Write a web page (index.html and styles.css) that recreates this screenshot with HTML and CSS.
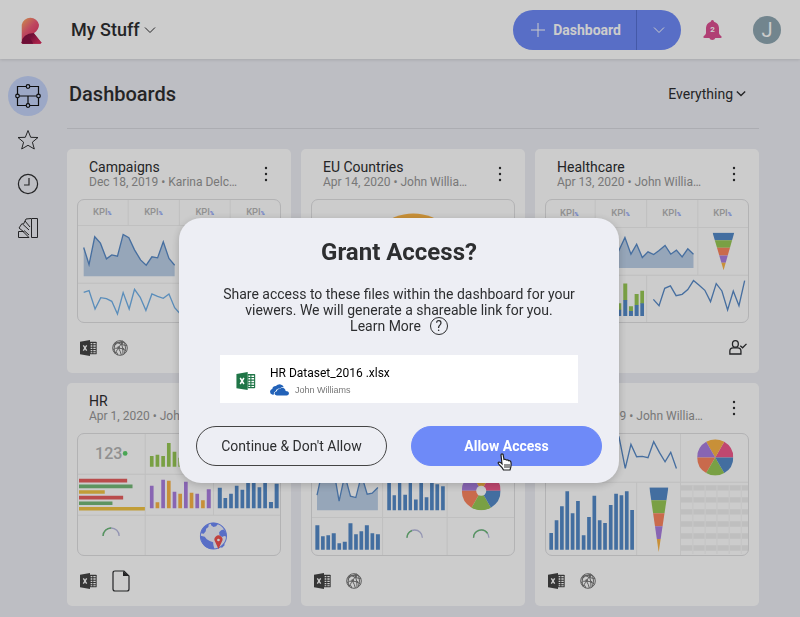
FILE: index.html
```html
<!DOCTYPE html>
<html lang="en">
<head>
<meta charset="utf-8">
<meta name="viewport" content="width=device-width, initial-scale=1">
<title>My Stuff</title>
<link rel="stylesheet" href="styles.css">
</head>
<body>
<svg class="defs" aria-hidden="true">
  <defs>
    <linearGradient id="logo-top" x1="0" y1="0" x2="0.7" y2="0.9">
      <stop offset="0" stop-color="#ffb45e"/><stop offset="0.5" stop-color="#ee5a78"/><stop offset="1" stop-color="#e0315f"/>
    </linearGradient>
    <linearGradient id="logo-leg" x1="0" y1="0" x2="1" y2="0.6">
      <stop offset="0" stop-color="#7a0f3a"/><stop offset="0.5" stop-color="#8f1647"/><stop offset="1" stop-color="#d42a5c"/>
    </linearGradient>
    <clipPath id="funnel-a"><path d="M547 263H612L580 376Z"/></clipPath>
    <clipPath id="funnel-b"><path d="M358 337H415L386 531Z"/></clipPath>
  </defs>
  <symbol id="chevron" viewBox="0 0 12 8"><path d="M1 1.5L6 6.5L11 1.5" fill="none" stroke="currentColor"/></symbol>
  <symbol id="kebab" viewBox="0 0 4 16"><g fill="currentColor"><circle cx="2" cy="2" r="1.2"/><circle cx="2" cy="8" r="1.2"/><circle cx="2" cy="14" r="1.2"/></g></symbol>
  <symbol id="excel" viewBox="0 0 51 48">
    <path d="M30 5H48Q50 5 50 7V41Q50 43 48 43H30Z" fill="currentColor"/>
    <path d="M32 9H37V13H32ZM40 9H47V13H40ZM32 16H37V20H32ZM40 16H47V20H40ZM32 23H37V27H32ZM40 23H47V27H40ZM32 30H37V34H32ZM40 30H47V34H40ZM32 37H37V40H32ZM40 37H47V40H40Z" fill="#fff"/>
    <path d="M0 5L30 0V48L0 43Z" fill="currentColor"/>
    <path d="M10 16L20 32M20 16L10 32" fill="none" stroke="#fff" stroke-width="4"/>
  </symbol>
  <symbol id="ball" viewBox="0 0 48 48">
    <g fill="none" stroke="currentColor" stroke-width="3">
      <circle cx="24" cy="24" r="22"/>
      <path d="M8 9Q26 6 38 8M13 6Q28 16 45 17M4 18Q14 8 32 3M33 3Q25 15 9 40M9 40Q3 28 9 12M19 24Q34 24 44 34M19 24Q26 34 28 45M3 30Q10 23 19 24M38 9Q44 24 37 41M28 10Q34 22 33 44M8 37Q18 36 17 45"/>
    </g>
    <g fill="currentColor"><circle cx="20" cy="23" r="4"/><circle cx="30" cy="11" r="3"/><circle cx="34" cy="27" r="3"/><circle cx="10" cy="11" r="3"/></g>
  </symbol>
  <symbol id="pie" viewBox="-60 -60 120 120">
    <path d="M0 0L60 0A60 60 0 0 0 30 -52Z" fill="#f05a8c"/>
    <path d="M0 0L30 -52A60 60 0 0 0 -30 -52Z" fill="#fab446"/>
    <path d="M0 0L-30 -52A60 60 0 0 0 -60 0Z" fill="#ab7fe0"/>
    <path d="M0 0L-60 0A60 60 0 0 0 -30 52Z" fill="#fc8560"/>
    <path d="M0 0L-30 52A60 60 0 0 0 30 52Z" fill="#98c955"/>
    <path d="M0 0L30 52A60 60 0 0 0 60 0Z" fill="#548ac8"/>
  </symbol>
</svg>

<header class="topbar">
  <a class="logo" href="#" aria-label="Home">
    <svg viewBox="0 0 62 86">
      <path d="M1 85V27A27 27 0 0 1 54 27Q54 43 38 53L61 82Q61 85 56 85Z" fill="url(#logo-top)"/>
      <path d="M1 81Q3 54 38 52L61 81Q62 85 57 85H5Q1 85 1 81Z" fill="url(#logo-leg)"/>
      <path d="M12 62Q29 66 36 85H5Q1 85 1 81Q3 69 12 62Z" fill="#8a1244"/>
    </svg>
  </a>
  <button class="workspace" type="button">My Stuff <svg class="chev"><use href="#chevron"/></svg></button>
  <div class="create">
    <button class="create-main" type="button"><svg viewBox="0 0 14 14"><path d="M7 0V14M0 7H14" stroke="#fff" fill="none"/></svg>Dashboard</button>
    <button class="create-more" type="button" aria-label="More"><svg class="chev"><use href="#chevron"/></svg></button>
  </div>
  <button class="bell" type="button" aria-label="Notifications">
    <svg viewBox="0 0 57 60"><path d="M28 0Q33 0 33 5Q47 9 48 24V40Q49 45 55 49Q58 54 52 54H37Q35 60 28 60Q21 60 19 54H5Q-1 54 2 49Q8 45 9 40V24Q10 9 23 5Q24 0 28 0Z" fill="#dc4f92"/></svg>
    <span class="count">2</span>
  </button>
  <button class="avatar" type="button">J</button>
</header>

<div class="shell">
  <nav class="rail">
    <a class="rail-item active" href="#" aria-label="Dashboards"><svg viewBox="0 0 26 26"><g fill="none" stroke="currentColor"><path d="M2.500 3.500H23.500V22.500H2.500ZM2.500 13H23.500M13 13V22"/><g class="knots"><circle cx="13" cy="3.500" r="1.800"/><circle cx="2.500" cy="13" r="1.800"/><circle cx="23.500" cy="13" r="1.800"/><circle cx="13" cy="22.500" r="1.800"/></g></g></svg></a>
    <a class="rail-item" href="#" aria-label="Favorites"><svg viewBox="0 0 26 26"><path d="M13 3.500L15.700 10.300L23 10.500L17.400 15.200L19.300 22L13 18.300L6.700 22L8.600 15.200L3 10.500L10.300 10.300Z" fill="none" stroke="currentColor"/></svg></a>
    <a class="rail-item" href="#" aria-label="Recent"><svg viewBox="0 0 26 26"><g fill="none" stroke="currentColor" stroke-width="1.200"><circle cx="13" cy="13" r="9.600"/><path d="M14 7V14H9"/></g></svg></a>
    <a class="rail-item" href="#" aria-label="Themes"><svg viewBox="0 0 26 26"><g fill="none" stroke="currentColor"><path d="M16.500 3.500H22.500V22.500H16.500ZM3.500 22.500V16.500H8L14 22.500ZM9 17L4 13L7 8.500L14 15M14 20L9 15.500M8.500 9L11 4L16 3.500M10 6L15 12"/></g></svg></a>
  </nav>

  <main class="content">
    <div class="heading">
      <h1>Dashboards</h1>
      <button class="filter" type="button">Everything <svg class="chev"><use href="#chevron"/></svg></button>
    </div>

    <div class="cards">
      <article class="card">
        <div class="card-head"><div><h2>Campaigns</h2><p>Dec 18, 2019 • Karina Delc…</p></div><button class="menu" type="button" aria-label="Options"><svg><use href="#kebab"/></svg></button></div>
        <svg class="preview" viewBox="52 163 610 370">
          <path class="rule" d="M52 242H662M52 415H662M205 163V242M358 163V242M510 163V242"/>
          <g class="kpi"><text x="100" y="211">KPI<tspan>%</tspan></text><text x="253" y="211">KPI<tspan>%</tspan></text><text x="406" y="211">KPI<tspan>%</tspan></text><text x="558" y="211">KPI<tspan>%</tspan></text></g>
          <path class="area" d="M72 394V308L88 359L105 276L122 295L140 342L156 330L173 334L190 269L207 279L224 315L242 345L259 361L276 336L293 339L310 291L327 341L344 361V394Z"/>
          <path class="line" d="M72 308L88 359L105 276L122 295L140 342L156 330L173 334L190 269L207 279L224 315L242 345L259 361L276 336L293 339L310 291L327 341L344 361"/>
          <path class="line sky" d="M72 442L88 437L106 492L123 458L140 461L156 469L173 507L190 443L208 492L224 433L241 457L258 496L276 447L293 454L310 460L327 447L344 488L361 507"/>
        </svg>
        <div class="card-foot"><svg class="excel"><use href="#excel"/></svg><svg class="ball"><use href="#ball"/></svg></div>
      </article>

      <article class="card">
        <div class="card-head"><div><h2>EU Countries</h2><p>Apr 14, 2020 • John Willia…</p></div><button class="menu" type="button" aria-label="Options"><svg><use href="#kebab"/></svg></button></div>
        <svg class="preview" viewBox="49 163 610 370"><circle cx="355" cy="351" r="145" fill="#fab446"/></svg>
        <div class="card-foot"></div>
      </article>

      <article class="card">
        <div class="card-head"><div><h2>Healthcare</h2><p>Apr 13, 2020 • John Willia…</p></div><button class="menu" type="button" aria-label="Options"><svg><use href="#kebab"/></svg></button></div>
        <svg class="preview" viewBox="46 163 610 370">
          <path class="rule" d="M46 248H656M46 391H656M196 163V248M350 163V248M503 163V391M350 391V533"/>
          <g class="kpi"><text x="91" y="214">KPI<tspan>%</tspan></text><text x="244" y="214">KPI<tspan>%</tspan></text><text x="397" y="214">KPI<tspan>%</tspan></text><text x="549" y="214">KPI<tspan>%</tspan></text></g>
          <path class="area" d="M267 369V317L285 278L303 328L320 298L337 338L354 321L371 329L387 317L405 302L422 328L439 316L456 336L473 312L490 328V369Z"/>
          <path class="line" d="M250 350L267 317L285 278L303 328L320 298L337 338L354 321L371 329L387 317L405 302L422 328L439 316L456 336L473 312L490 328"/>
          <g clip-path="url(#funnel-a)"><path class="blue" d="M540 263h80v23h-80z"/><path class="green" d="M540 286h80v23h-80z"/><path class="coral" d="M540 309h80v23h-80z"/><path class="purple" d="M540 332h80v22h-80z"/><path class="amber" d="M540 354h80v23h-80z"/></g>
          <path class="green" d="M262 475h12v20h-12zM280 416h12v50h-12zM297 484h12v15h-12zM314 447h12v34h-12zM331 437h11v39h-11z"/>
          <path class="blue" d="M262 494h12v19h-12zM280 465h12v48h-12zM297 498h12v15h-12zM314 480h12v33h-12zM331 475h11v38h-11z"/>
          <path class="line" d="M370 463L387 482L404 430L421 423L438 452L456 448L473 434L490 407L507 421L524 436L541 470L558 416L575 438L592 495L609 438L626 482L643 407"/>
        </svg>
        <div class="card-foot end"><svg class="shared" viewBox="0 0 54 46"><g fill="none" stroke="currentColor" stroke-width="4"><ellipse cx="19" cy="12" rx="9" ry="10"/><path d="M2 43V34Q2 24 12 24H26Q36 24 36 34V43ZM34 18L41 24L53 12"/></g></svg></div>
      </article>

      <article class="card">
        <div class="card-head"><div><h2>HR</h2><p>Apr 1, 2020 • John Willia…</p></div><button class="menu" type="button" aria-label="Options"><svg><use href="#kebab"/></svg></button></div>
        <svg class="preview" viewBox="52 175 610 370">
          <path class="rule" d="M52 298H662M52 421H662M256 175V545M460 298V421"/>
          <text class="number" x="106" y="252">123</text><circle cx="196" cy="236" r="7" fill="#5cd06a"/>
          <path class="green" d="M270 244h11v32h-11zM287 240h11v36h-11zM304 244h11v32h-11zM321 205h11v71h-11zM338 231h11v45h-11zM355 249h11v27h-11z"/>
          <path fill="#e86060" d="M58 312H202v11H58zM58 363H190v11H58z"/>
          <path fill="#75ba78" d="M58 329H218v11H58zM58 380H158v10H58z"/>
          <path fill="#f2c545" d="M58 346H135v11H58zM58 396H255v11H58z"/>
          <path class="purple" d="M270 333h11v67h-11zM304 315h11v85h-11zM338 351h11v49h-11zM372 321h11v79h-11zM406 357h11v43h-11zM440 343h12v57h-12z"/>
          <path class="amber" d="M287 382h11v18h-11zM321 318h11v82h-11zM355 357h11v43h-11zM389 354h11v46h-11zM423 376h11v24h-11z"/>
          <path class="blue" d="M473 339h12v61h-12zM490 369h11v31h-11zM507 357h11v43h-11zM524 333h11v67h-11zM541 345h11v55h-11zM558 320h11v80h-11zM575 320h11v80h-11zM592 337h11v63h-11zM609 320h11v80h-11zM626 381h12v19h-12zM643 327h12v73h-12z"/>
          <path class="gauge" d="M130 483A24 24 0 0 1 178 483"/><path class="gauge full" d="M130 483A24 24 0 0 1 154 459"/>
          <circle cx="460" cy="483" r="39" fill="#eef0fa" stroke="#6e8af8" stroke-width="3"/>
          <path fill="#6e8af8" d="M422 475Q427 455 446 447L445 456L438 461L437 469L431 476ZM452 444Q464 442 474 446L468 454L460 456L453 451ZM477 472Q483 463 492 464Q500 473 500 485L492 483L486 486L478 481ZM422 482L434 485L440 493L449 498L459 502L460 511L463 522Q438 524 427 505Q422 496 422 482ZM482 515L491 505L494 510L485 519Z"/>
          <path d="M475 522L465 500A12 12 0 1 1 485 500Z" fill="#f0524f"/><circle cx="475" cy="495" r="4" fill="#fff"/>
        </svg>
        <div class="card-foot"><svg class="excel"><use href="#excel"/></svg><svg class="file" viewBox="0 0 18 22"><path d="M3 1H12L17 6V19Q17 21 15 21H3Q1 21 1 19V3Q1 1 3 1Z" fill="none" stroke="currentColor" stroke-width="1.200"/><path d="M11 1L17 6H11Z" fill="currentColor"/></svg></div>
      </article>

      <article class="card">
        <div class="card-head"><div><h2>Sales</h2><p>Dec 18, 2019 • John Willia…</p></div><button class="menu" type="button" aria-label="Options"><svg><use href="#kebab"/></svg></button></div>
        <svg class="preview" viewBox="49 -126 610 370">
          <path class="rule" d="M49 127H659M263 -126V244M456 -126V244"/>
          <path class="area" d="M67 105V60L80 0L117 -15L133 78L150 0L167 63L183 67L200 0L217 57L232 54L249 37V105Z"/>
          <path class="line" d="M67 60L80 0L117 -15L133 78L150 0L167 63L183 67L200 0L217 57L232 54L249 37"/>
          <path class="blue" d="M277 10h11v95h-11zM293 60h10v45h-10zM309 10h10v95h-10zM325 59h11v46h-11zM341 10h10v95h-10zM357 73h11v32h-11zM373 10h11v95h-11zM389 66h11v39h-11zM405 10h11v95h-11zM421 27h11v78h-11zM438 33h11v72h-11z"/>
          <use href="#pie" x="500" y="-11" width="116" height="116"/><circle cx="558" cy="47" r="15" fill="#fff"/>
          <path class="blue" d="M62 150h12v73h-12zM79 183h11v40h-11zM95 180h11v43h-11zM111 174h12v49h-12zM128 204h11v19h-11zM144 199h12v24h-12zM161 144h12v79h-12zM178 177h11v46h-11zM194 168h11v55h-11zM210 150h12v73h-12zM227 174h11v49h-11zM243 177h12v46h-12z"/>
          <path class="gauge" d="M336 187A23 23 0 0 1 382 187M535 187A23 23 0 0 1 581 187"/>
          <path class="gauge full" d="M336 187A23 23 0 0 1 351 166M535 187A23 23 0 0 1 577 174"/>
        </svg>
        <div class="card-foot"><svg class="excel"><use href="#excel"/></svg><svg class="ball"><use href="#ball"/></svg></div>
      </article>

      <article class="card">
        <div class="card-head"><div><h2>Sales</h2><p>Dec 18, 2019 • John Willia…</p></div><button class="menu" type="button" aria-label="Options"><svg><use href="#kebab"/></svg></button></div>
        <svg class="preview" viewBox="46 175 610 370">
          <path class="rule" d="M46 322H656M451 175V545M320 322V545"/>
          <path class="line" d="M250 250L267 185L286 281L303 209L320 246L337 245L354 249L371 201L388 233L405 261L422 233L439 281"/>
          <use href="#pie" x="501" y="194" width="108" height="108"/>
          <path class="blue" d="M59 474h11v50h-11zM75 436h11v88h-11zM91 394h11v130h-11zM107 349h11v175h-11zM123 415h11v109h-11zM139 378h11v146h-11zM156 481h11v43h-11zM172 426h11v98h-11zM188 363h11v161h-11zM204 436h11v88h-11zM220 444h11v80h-11zM237 390h11v134h-11zM253 357h11v167h-11zM269 361h11v163h-11zM285 349h11v175h-11zM301 405h11v119h-11z"/>
          <g clip-path="url(#funnel-b)"><path class="blue" d="M350 337h70v39h-70z"/><path class="green" d="M350 376h70v39h-70z"/><path class="coral" d="M350 415h70v39h-70z"/><path class="purple" d="M350 454h70v38h-70z"/><path class="amber" d="M350 492h70v40h-70z"/></g>
          <path d="M452 339H656M452 375H656M452 411H656M452 447H656M452 483H656M452 519H656" stroke="#efefef" stroke-width="16"/>
          <path d="M488 331V537M525 331V537M560 331V537M597 331V537M633 331V537" stroke="#f8f8f8" stroke-width="4"/>
        </svg>
        <div class="card-foot"><svg class="excel"><use href="#excel"/></svg><svg class="ball"><use href="#ball"/></svg></div>
      </article>
    </div>
  </main>
</div>

<div class="overlay">
  <section class="dialog" role="dialog" aria-modal="true" aria-labelledby="dialog-title">
    <h2 id="dialog-title">Grant Access?</h2>
    <p>Share access to these files within the dashboard for your viewers. We will generate a shareable link for you.</p>
    <a class="learn" href="#">Learn More <span class="help">?</span></a>
    <div class="source">
      <svg class="source-icon"><use href="#excel"/></svg>
      <div>
        <div class="source-name">HR Dataset_2016 .xlsx</div>
        <div class="source-owner"><svg viewBox="0 0 56 34"><path d="M8 31Q0 29 0 22Q0 16 7 13Q8 5 17 5Q22 0 29 0Q38 1 41 9Q34 7 29 13Q19 11 17 20Q10 23 11 31Z" fill="#2262b8"/><path d="M20 33Q13 32 13 27Q14 22 20 21Q21 13 29 14Q36 7 43 13Q46 16 46 20Q55 20 56 27Q55 33 49 33Z" fill="#2262b8"/></svg>John Williams</div>
      </div>
    </div>
    <div class="actions">
      <button class="btn outline" type="button">Continue &amp; Don't Allow</button>
      <button class="btn primary" type="button">Allow Access
        <svg class="pointer" viewBox="0 0 16 18"><path d="M4 2Q4 .8 5 .8Q6.200 .8 6.200 2L7 6.500Q8.500 5.800 9.300 7Q11 6.300 11.600 7.700Q13.700 7.200 14 9.500Q14.500 13 13 17H6.500Q5.500 14.500 2.500 12Q.5 10 1.500 9.300Q2.800 8.600 5 10.800Z" fill="#fff" stroke="#222" stroke-width="1.200"/><path d="M8 11V15M10 11V15M12 11V15" stroke="#222"/></svg>
      </button>
    </div>
  </section>
</div>
</body>
</html>
```
FILE: styles.css
```css
* { box-sizing: border-box; }

body {
  margin: 0;
  background: #edeef4;
  color: #2d2e30;
  font: 14px/16px Roboto, sans-serif;
}

h1, h2, p { margin: 0; }
a { color: inherit; text-decoration: none; }
svg { display: block; flex: none; }

button {
  border: 0;
  padding: 0;
  background: none;
  color: inherit;
  font: inherit;
}

.defs { position: absolute; width: 0; height: 0; }
.chev { width: 12px; height: 8px; }

.topbar {
  position: relative;
  display: flex;
  align-items: center;
  height: 59px;
  padding: 0 19px 0 21px;
  background: #fff;
  box-shadow: 0 1px 3px rgba(0, 0, 0, .12);
}

.logo svg { width: 21px; height: 28px; }

.workspace {
  display: flex;
  align-items: center;
  gap: 4px;
  margin-left: 29px;
  font-size: 18px;
  font-weight: 500;
  line-height: 24px;
}

.create {
  display: flex;
  height: 40px;
  margin-left: auto;
  border-radius: 20px;
  overflow: hidden;
  background: #6e8af8;
  color: #fff;
}

.create-main {
  display: flex;
  align-items: center;
  gap: 8px;
  padding: 0 15px 0 18px;
  border-right: 1px solid #5570d2;
  font-size: 14px;
  font-weight: 700;
}

.create-main svg { width: 14px; height: 14px; }
.create-more { display: grid; place-items: center; width: 44px; }

.bell { position: relative; margin-left: 22px; }
.bell svg { width: 19px; height: 20px; }

.count {
  position: absolute;
  inset: 0;
  color: #fff;
  font-size: 8px;
  font-weight: 700;
  line-height: 20px;
  text-align: center;
}

.avatar {
  width: 28px;
  height: 28px;
  margin-left: 31px;
  border-radius: 50%;
  background: #8fa7b2;
  color: #fff;
  font-size: 20px;
  line-height: 28px;
  text-align: center;
}

.shell { display: flex; }

.rail {
  display: flex;
  flex-direction: column;
  gap: 4px;
  padding: 17px 19px 0 8px;
}

.rail-item {
  display: grid;
  place-items: center;
  width: 40px;
  height: 40px;
  border-radius: 50%;
}

.rail-item svg { width: 26px; height: 26px; }
.rail-item.active { background: #c4d3f8; color: #111; }
.rail-item.active svg { stroke-width: 1.2; }
.knots { fill: #c4d3f8; }

.content { flex: 1; padding: 0 41px 10px 0; }

.heading {
  display: flex;
  align-items: center;
  justify-content: space-between;
  height: 70px;
  margin-bottom: 20px;
  padding: 0 13px 0 2px;
  border-bottom: 1px solid #d8d9df;
}

.heading h1 { font-size: 20px; font-weight: 500; line-height: 24px; }
.filter { display: flex; align-items: center; gap: 3px; }
.filter .chev { width: 10px; height: 7px; stroke-width: 1.6; }

.cards {
  display: grid;
  grid-template-columns: repeat(3, 1fr);
  gap: 10px;
}

.card {
  padding: 10px 10px 0;
  border-radius: 5px;
  background: #fff;
}

.card-head {
  display: flex;
  justify-content: space-between;
  margin-bottom: 10px;
  padding: 0 13px 0 12px;
}

.card-head h2 { font-size: 14px; font-weight: 400; line-height: 16px; }
.card-head p { color: #969696; font-size: 12px; line-height: 14px; }
.menu svg { width: 4px; height: 16px; }

.preview {
  width: 100%;
  border-radius: 7px;
  outline: 1px solid #e0e0e2;
  outline-offset: -1px;
}

.rule { fill: none; stroke: #f0f0f0; stroke-width: 3; }
.line { fill: none; stroke: #598bc8; stroke-width: 4; }
.line.sky { stroke: #72b2ea; }
.area { fill: #bcd0e8; }
.blue { fill: #548ac8; }
.green { fill: #98c955; }
.coral { fill: #fc8560; }
.purple { fill: #ab7fe0; }
.amber { fill: #fab446; }
.gauge { fill: none; stroke: #b9bbe0; stroke-width: 4; }
.gauge.full { stroke: #6bbd72; }
.kpi { fill: #b5b5b5; font-size: 28px; font-weight: 500; }
.kpi tspan { fill: #6e8af8; font-size: 16px; font-weight: 700; }
.number { fill: #b5b5b5; font-size: 48px; font-weight: 500; }

.card-foot {
  display: flex;
  align-items: center;
  gap: 15px;
  height: 50px;
  padding: 0 2px 0 3px;
}

.card-foot.end { justify-content: flex-end; }
.excel { width: 17px; height: 16px; color: #444; }
.ball { width: 16px; height: 16px; color: #777; }
.file { width: 18px; height: 22px; }
.shared { width: 18px; height: 15px; }

.overlay {
  position: fixed;
  inset: 0;
  display: flex;
  align-items: flex-start;
  justify-content: center;
  padding: 218px 2px 0 0;
  background: rgba(0, 0, 0, .2);
}

.dialog {
  display: flex;
  flex-direction: column;
  align-items: center;
  width: 440px;
  padding: 20px 17px 17px;
  border-radius: 22px;
  background: #edeef4;
  box-shadow: 0 2px 8px rgba(0, 0, 0, .2);
  text-align: center;
}

.dialog > h2 { margin-bottom: 20px; font-size: 24px; font-weight: 700; line-height: 28px; }
.dialog > p { max-width: 360px; }
.learn { display: flex; align-items: center; gap: 9px; }

.help {
  width: 18px;
  height: 18px;
  margin: -1px 0;
  border: 1px solid #2d2e30;
  border-radius: 50%;
}

.source {
  display: flex;
  align-items: center;
  gap: 14px;
  width: 358px;
  height: 48px;
  margin: 21px 0 23px;
  padding: 4px 16px 0;
  background: #fff;
  text-align: left;
}

.source-icon { width: 20px; height: 18px; color: #1f7547; }
.source-name { color: #000; font-size: 12px; line-height: 18px; }

.source-owner {
  display: flex;
  align-items: center;
  gap: 6px;
  color: #777;
  font: 9px/16px "Liberation Sans", sans-serif;
}

.source-owner svg { width: 19px; height: 12px; }

.actions { display: flex; gap: 24px; width: 100%; }

.btn {
  position: relative;
  flex: 1;
  height: 40px;
  border: 1px solid #444;
  border-radius: 20px;
}

.btn.primary { border-color: #6e8af8; background: #6e8af8; color: #fff; font-weight: 700; }
.pointer { position: absolute; top: 26px; left: 85px; width: 16px; height: 18px; }
```
